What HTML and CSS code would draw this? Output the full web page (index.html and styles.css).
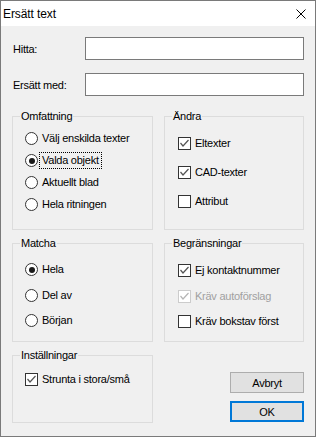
FILE: index.html
```html
<!DOCTYPE html>
<html lang="sv">
<head>
    <meta charset="UTF-8">
    <title>Ersätt text</title>
    <link rel="stylesheet" href="styles.css">
</head>
<body>
    <div class="window">
        <div class="titlebar">
            <span class="title">Ersätt text</span>
            <svg class="close" width="10" height="10" viewBox="0 0 10 10">
                <path d="M0.5 0.5 L9.5 9.5 M9.5 0.5 L0.5 9.5" stroke="#000" stroke-width="1" fill="none"/>
            </svg>
        </div>
        <div class="content">
            <div class="field">
                <label for="find">Hitta:</label>
                <input id="find" class="textbox" type="text">
            </div>
            <div class="field second">
                <label for="replace">Ersätt med:</label>
                <input id="replace" class="textbox" type="text">
            </div>

            <div class="groups">
                <div class="group scope">
                    <span class="group-title">Omfattning</span>
                    <div class="opt"><span class="radio"></span><span>Välj enskilda texter</span></div>
                    <div class="opt"><span class="radio on"></span><span class="focus">Valda objekt</span></div>
                    <div class="opt"><span class="radio"></span><span>Aktuellt blad</span></div>
                    <div class="opt"><span class="radio"></span><span>Hela ritningen</span></div>
                </div>
                <div class="group change">
                    <span class="group-title">Ändra</span>
                    <div class="opt"><span class="check on"><svg viewBox="0 0 11 11"><path d="M1.5 5 L4 8 L9.5 2" /></svg></span><span>Eltexter</span></div>
                    <div class="opt"><span class="check on"><svg viewBox="0 0 11 11"><path d="M1.5 5 L4 8 L9.5 2" /></svg></span><span>CAD-texter</span></div>
                    <div class="opt"><span class="check"></span><span>Attribut</span></div>
                </div>

                <div class="group match">
                    <span class="group-title">Matcha</span>
                    <div class="opt"><span class="radio on"></span><span>Hela</span></div>
                    <div class="opt"><span class="radio"></span><span>Del av</span></div>
                    <div class="opt"><span class="radio"></span><span>Början</span></div>
                </div>
                <div class="group limits">
                    <span class="group-title">Begränsningar</span>
                    <div class="opt"><span class="check on"><svg viewBox="0 0 11 11"><path d="M1.5 5 L4 8 L9.5 2" /></svg></span><span>Ej kontaktnummer</span></div>
                    <div class="opt disabled"><span class="check on"><svg viewBox="0 0 11 11"><path d="M1.5 5 L4 8 L9.5 2" /></svg></span><span>Kräv autoförslag</span></div>
                    <div class="opt"><span class="check"></span><span>Kräv bokstav först</span></div>
                </div>

                <div class="group settings">
                    <span class="group-title">Inställningar</span>
                    <div class="opt"><span class="check on"><svg viewBox="0 0 11 11"><path d="M1.5 5 L4 8 L9.5 2" /></svg></span><span>Strunta i stora/små</span></div>
                </div>
                <div class="actions">
                    <button class="btn">Avbryt</button>
                    <button class="btn default">OK</button>
                </div>
            </div>
        </div>
    </div>
</body>
</html>
```

FILE: styles.css
```css
* , *::after , *::before{
    box-sizing: border-box;
    margin: 0;
    padding: 0;
}
body{
    margin: 0;
    background: #f0f0f0;
    font-family: "Liberation Sans", Arial, sans-serif;
    font-size: 11px;
    letter-spacing: -0.25px;
    color: #000;
}
.window{
    width: 316px;
    height: 437px;
    border: 1px solid #7a7a7a;
    background: #f0f0f0;
    display: flex;
    flex-direction: column;
}
.titlebar{
    height: 25px;
    background: #fff;
    display: flex;
    align-items: center;
    justify-content: space-between;
    padding-left: 2px;
    padding-right: 9px;
}
.title{
    font-size: 12px;
    line-height: 14px;
    letter-spacing: -0.1px;
}
.close{
    display: block;
}
.content{
    padding: 11px 11px 0 11px;
}
.field{
    display: grid;
    grid-template-columns: 73px 219px;
    align-items: center;
}
.field.second{
    margin-top: 13px;
}
.field label{
    padding-left: 1px;
}
.textbox{
    height: 23px;
    border: 1px solid #7a7a7a;
    background: #fff;
    outline: none;
}

.groups{
    margin-top: 20px;
    display: grid;
    grid-template-columns: 141px 140px;
    grid-template-rows: 114px 99px 68px;
    column-gap: 11px;
    row-gap: 13px;
}
.group{
    position: relative;
    border: 1px solid #dcdcdc;
    display: flex;
    flex-direction: column;
    padding-left: 12px;
}
.group-title{
    position: absolute;
    top: -7px;
    left: 7px;
    padding: 0 1px;
    background: #f0f0f0;
    line-height: 13px;
}
.scope{ padding-top: 15px; gap: 9px; }
.change{ padding-top: 20px; gap: 16px; padding-left: 13px; }
.match{ padding-top: 19px; gap: 12.5px; }
.limits{ padding-top: 20px; gap: 12.5px; padding-left: 13px; }
.settings{ padding-top: 17px; }

.opt{
    display: flex;
    align-items: center;
    gap: 4px;
    height: 13px;
    line-height: 13px;
    white-space: nowrap;
}
.radio{
    width: 13px;
    height: 13px;
    border: 1px solid #333;
    border-radius: 50%;
    background: #fff;
    flex: none;
    display: flex;
    align-items: center;
    justify-content: center;
}
.radio.on::after{
    content: "";
    width: 6px;
    height: 6px;
    border-radius: 50%;
    background: #1a1a1a;
}
.check{
    width: 13px;
    height: 13px;
    border: 1px solid #333;
    background: #fff;
    flex: none;
    display: flex;
}
.check svg{
    width: 11px;
    height: 11px;
    fill: none;
    stroke: #555;
    stroke-width: 1.2;
}
.focus{
    outline: 1px dotted #000;
    outline-offset: 1px;
    padding: 0 1px;
    margin-left: -1px;
}
.disabled{
    color: #a0a0a0;
}
.disabled .check{
    border-color: #cccccc;
}
.disabled .check svg{
    stroke: #b5b5b5;
}

.actions{
    display: flex;
    flex-direction: column;
    align-items: flex-end;
    padding-top: 17px;
    gap: 8px;
}
.btn{
    width: 74px;
    height: 21px;
    border: 1px solid #adadad;
    background: #e1e1e1;
    font-family: "Liberation Sans", Arial, sans-serif;
    font-size: 11px;
    letter-spacing: -0.25px;
    color: #000;
}
.btn.default{
    border: 2px solid #0078d7;
}
```
